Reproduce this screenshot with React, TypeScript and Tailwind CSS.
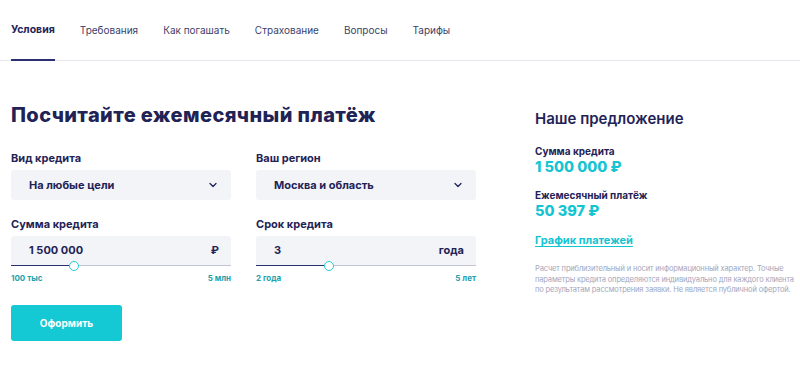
import { ChevronDown } from 'lucide-react'

const tabs = ['Условия', 'Требования', 'Как погашать', 'Страхование', 'Вопросы', 'Тарифы']

function Select({ value }: { value: string }) {
  return (
    <div className="h-[30px] rounded-[3px] bg-[#f3f4f8] flex items-center justify-between pl-[18px] pr-[12px]">
      <span className="text-[11px] font-bold text-[#1f2356]">{value}</span>
      <ChevronDown size={12} strokeWidth={2.5} className="text-[#1f2356]" />
    </div>
  )
}

function SliderInput({
  value,
  unit,
  percent,
  min,
  max,
}: {
  value: string
  unit: string
  percent: number
  min: string
  max: string
}) {
  return (
    <div>
      <div className="h-[29px] rounded-t-[3px] bg-[#f3f4f8] flex items-center justify-between pl-[18px] pr-[12px]">
        <span className="text-[11px] font-bold text-[#1f2356]">{value}</span>
        <span className="text-[11px] font-bold text-[#1f2356]">{unit}</span>
      </div>
      <div className="relative h-px bg-[#c3c5d2]">
        <div className="absolute left-0 top-0 h-px bg-[#2b3170]" style={{ width: `${percent}%` }} />
        <div
          className="absolute top-[-4px] w-[10px] h-[10px] -ml-[5px] rounded-full bg-white border-[1.5px] border-[#27cdd8]"
          style={{ left: `${percent}%` }}
        />
      </div>
      <div className="flex justify-between mt-[7px] text-[8px] font-bold text-[#239fac] leading-[10px]">
        <span>{min}</span>
        <span>{max}</span>
      </div>
    </div>
  )
}

export default function App() {
  return (
    <div className="w-[800px] h-[372px] bg-white overflow-hidden" style={{ fontFamily: 'Inter, "Noto Sans", sans-serif' }}>
      <nav className="h-[61px] border-b border-[#e6e7ec] flex items-stretch px-[11px] gap-[25px]">
        {tabs.map((t, i) => (
          <div
            key={t}
            className={
              i === 0
                ? 'flex items-center text-[10.5px] font-bold text-[#1f2356] border-b-2 border-[#2b3170] -mb-px'
                : 'flex items-center text-[10px] text-[#3b3f6b]'
            }
          >
            {t}
          </div>
        ))}
      </nav>

      <div className="flex pl-[11px] pt-[40px]">
        <div className="w-[465px] shrink-0">
          <h1 className="text-[20px] leading-[28px] font-extrabold text-[#1f2356] tracking-[0.4px]">
            Посчитайте ежемесячный платёж
          </h1>

          <div className="grid grid-cols-2 gap-x-[25px] mt-[22px]">
            <div>
              <div className="text-[11px] leading-[14px] font-bold text-[#1f2356] mb-[5px]">Вид кредита</div>
              <Select value="На любые цели" />
            </div>
            <div>
              <div className="text-[11px] leading-[14px] font-bold text-[#1f2356] mb-[5px]">Ваш регион</div>
              <Select value="Москва и область" />
            </div>

            <div className="mt-[17px]">
              <div className="text-[11px] leading-[14px] font-bold text-[#1f2356] mb-[5px]">Сумма кредита</div>
              <SliderInput value="1 500 000" unit="₽" percent={28.5} min="100 тыс" max="5 млн" />
            </div>
            <div className="mt-[17px]">
              <div className="text-[11px] leading-[14px] font-bold text-[#1f2356] mb-[5px]">Срок кредита</div>
              <SliderInput value="3" unit="года" percent={33} min="2 года" max="5 лет" />
            </div>
          </div>

          <button className="mt-[22px] w-[111px] h-[36px] rounded-[3px] bg-[#14c8d4] text-white text-[10px] font-bold">
            Оформить
          </button>
        </div>

        <div className="ml-[59px] w-[265px] shrink-0 pt-[8px]">
          <h2 className="text-[15px] leading-[20px] font-semibold text-[#1f2356]">Наше предложение</h2>

          <div className="mt-[16px] text-[10px] leading-[13px] font-bold text-[#1f2356]">Сумма кредита</div>
          <div className="text-[14.5px] leading-[17px] font-extrabold text-[#14c4d1]">1 500 000 ₽</div>

          <div className="mt-[14px] text-[10px] leading-[13px] font-bold text-[#1f2356]">Ежемесячный платёж</div>
          <div className="text-[14.5px] leading-[17px] font-extrabold text-[#14c4d1]">50 397 ₽</div>

          <a className="block mt-[14px] text-[11px] leading-[14px] font-bold text-[#14c4d1] underline underline-offset-2">
            График платежей
          </a>

          <p className="mt-[17px] w-[265px] text-[7.5px] leading-[10.5px] tracking-[-0.15px] text-[#a3a6bd]">
            Расчет приблизительный и носит информационный характер. Точные параметры кредита определяются индивидуально для каждого клиента по результатам рассмотрения заявки. Не является публичной офертой.
          </p>
        </div>
      </div>
    </div>
  )
}
